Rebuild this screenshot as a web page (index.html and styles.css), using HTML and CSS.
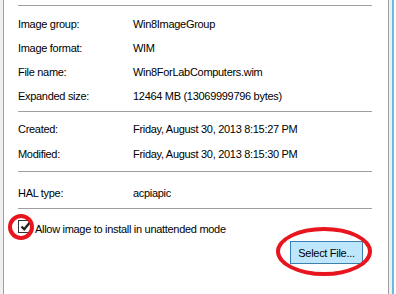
FILE: index.html
```html
<!DOCTYPE html>
<html lang="en">
<head>
  <meta charset="UTF-8" />
  <title>Image Properties</title>
  <link rel="stylesheet" href="styles.css">
</head>
<body>
  <div class="window">
    <div class="edge-left"></div>
    <div class="panel">
      <div class="section first">
        <div class="row"><span class="label">Image group:</span><span class="value">Win8ImageGroup</span></div>
        <div class="row"><span class="label">Image format:</span><span class="value">WIM</span></div>
        <div class="row"><span class="label">File name:</span><span class="value">Win8ForLabComputers.wim</span></div>
        <div class="row"><span class="label">Expanded size:</span><span class="value">12464 MB (13069999796 bytes)</span></div>
      </div>
      <div class="section second">
        <div class="row"><span class="label">Created:</span><span class="value">Friday, August 30, 2013 8:15:27 PM</span></div>
        <div class="row"><span class="label">Modified:</span><span class="value">Friday, August 30, 2013 8:15:30 PM</span></div>
      </div>
      <div class="section third">
        <div class="row"><span class="label">HAL type:</span><span class="value">acpiapic</span></div>
      </div>
      <div class="section last">
        <label class="check-row">
          <span class="checkbox">
            <svg width="11" height="11" viewBox="0 0 11 11"><path d="M1.5 5.5 L4.2 8.3 L9.8 1.6" fill="none" stroke="#222" stroke-width="2.3"/></svg>
            <span class="ring small"></span>
          </span>
          <span class="check-text">Allow image to install in unattended mode</span>
        </label>
        <div class="actions">
          <span class="btn-wrap">
            <button class="select-btn">Select File...</button>
            <span class="ring big"></span>
          </span>
        </div>
      </div>
    </div>
    <div class="edge-right"></div>
    <div class="scroll-line"></div>
    <div class="edge-end"></div>
  </div>
</body>
</html>
```

FILE: styles.css
```css
body {
  margin: 0;
  font-family: "Liberation Sans", Arial, sans-serif;
  font-size: 11px;
  letter-spacing: -0.3px;
  color: #000;
  background: #fff;
}
.window {
  display: flex;
  height: 294px;
  overflow: hidden;
}
.edge-left {
  width: 3px;
  background: #f0f0f0;
}
.panel {
  flex: 1;
  background: #fff;
  border-left: 1px solid #a0a0a0;
  border-right: 1px solid #a0a0a0;
  padding: 5px 16px 0 14px;
}
.edge-right {
  width: 3px;
  background: #f0f0f0;
}
.scroll-line {
  width: 2px;
  background: #6ab7e2;
}
.edge-end {
  width: 2px;
  background: #fff;
}
.section {
  border-top: 1px solid #a0a0a0;
}
.section.first {
  padding: 6px 0 3px;
}
.section.second {
  padding: 5px 0 4px;
}
.section.third {
  padding: 9px 0 2px;
}
.row {
  display: flex;
  height: 24px;
  line-height: 24px;
}
.second .row, .third .row {
  height: 25px;
  line-height: 25px;
}
.label {
  width: 115px;
  flex-shrink: 0;
}
.check-row {
  display: flex;
  align-items: flex-start;
  margin-top: 11px;
  height: 16px;
}
.checkbox {
  position: relative;
  width: 11px;
  height: 11px;
  border: 1px solid #333;
  background: #fff;
  margin-right: 4px;
  display: flex;
  align-items: center;
  justify-content: center;
  flex-shrink: 0;
}
.checkbox svg {
  position: relative;
  left: 1px;
}
.check-text {
  line-height: 14px;
  margin-top: 2px;
}
.ring {
  position: absolute;
  border: 4px solid #e8141e;
  border-radius: 50%;
  pointer-events: none;
}
.ring.small {
  left: -11px;
  top: -7px;
  width: 18px;
  height: 18px;
}
.actions {
  display: flex;
  justify-content: flex-end;
  margin-top: 5px;
  padding-right: 9px;
}
.btn-wrap {
  position: relative;
  display: inline-block;
}
.select-btn {
  font-family: inherit;
  font-size: 11px;
  letter-spacing: -0.3px;
  width: 73px;
  height: 23px;
  padding: 0;
  margin: 0;
  border: 1px solid #3c7fb1;
  border-radius: 0;
  background: #bee6fd;
  color: #000;
}
.ring.big {
  left: -14px;
  top: -14px;
  width: 88px;
  height: 41px;
}
```
